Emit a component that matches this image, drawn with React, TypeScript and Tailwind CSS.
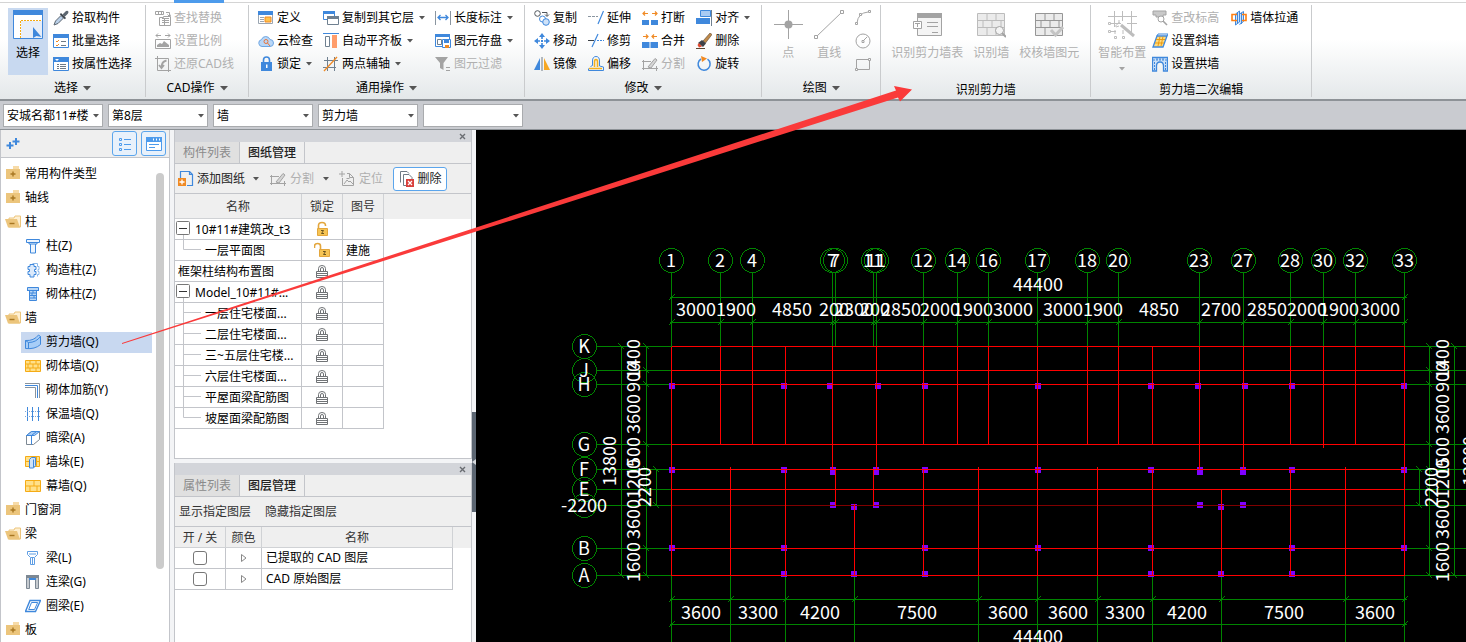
import { Fragment, type ReactNode } from "react";

const BLUE = "#3f88dc";
const GRAY = "#a3a3a3";
const ORANGE = "#f08a24";

// 16x16 icons
const icons: Record<string, ReactNode> = {
  pick: (
    <>
      <path d="M1 15l1.5-4L8 5.5l2.5 2.5L5 13.5z" fill="#b9cfe8" stroke="#5c6670" />
      <path d="M8 3l5 5-1.2 1.2-5-5z" fill="#3d444b" />
      <path d="M9.5 4.5L13 1q1.5-.8 2.2.2T15 3.5L11.5 7z" fill="#5c6670" />
    </>
  ),
  batch: (
    <>
      <path d="M.5 2.5h15v12H.5z" fill="#fff" stroke={BLUE} />
      <path d="M0 1h16v4H0z" fill={BLUE} />
      <path d="M3 8l1 1 2-2M3 12l1 1 2-2" fill="none" stroke={ORANGE} />
      <path d="M8 8.5h5M8 12.5h5" stroke="#6f7a85" />
    </>
  ),
  prop: (
    <>
      <path d="M.5 2.5h15v12H.5z" fill="#fff" stroke={BLUE} />
      <path d="M0 1h16v5H0z" fill={BLUE} />
      <path d="M2 3h4L4 5z" fill="#fff" />
      <path d="M4 8.5h2M7 8.5h6M4 10.5h2M7 10.5h6M4 12.5h2M7 12.5h6" stroke="#6f7a85" />
    </>
  ),
  find: (
    <g fill="none" stroke={GRAY}>
      <path d="M.5 1.5h8v3h-8zM3.5 1.5v3M6.5 1.5v3M11 2.5h3.5V6M12.5 4.5l2 2 1.5-2" />
      <path d="M4.5 7.5h4v-1h7v9h-11zM7 8.5h7M7 10.5h7M7 12.5h7M9.5 8v7" />
    </g>
  ),
  scale: (
    <>
      <path d="M.5 6.5h15v9H.5z" fill="none" stroke={GRAY} />
      <path d="M2 14V12l3-2 2 1 2-3 5 4v2z" fill={GRAY} />
      <path d="M1 2.5h5M3 .5l-2 2 2 2M15 2.5h-5M13 .5l2 2-2 2" fill="none" stroke={GRAY} />
    </>
  ),
  restore: (
    <g fill="none" stroke={GRAY}>
      <path d="M2.5 0v14.5H16M0 2.5h13.5V16" />
      <path d="M11.5 4.5q-5 1-5 7M4 9l2.5 3L9 9" strokeWidth="1.8" />
    </g>
  ),
  define: (
    <>
      <path d="M.5 1.5h14v12H.5z" fill="#fff" stroke="#9aa5b1" />
      <path d="M0 1h15v4H0z" fill={BLUE} />
      <path d="M2 7.5h4M2 9.5h4M2 11.5h4" stroke="#9aa5b1" />
      <path d="M7 7h6v5H7z" fill="#ffc34d" stroke={ORANGE} />
    </>
  ),
  cloud: (
    <>
      <path d="M4 13.5a3.5 3.5 0 0 1-.5-6.9A4.5 4.5 0 0 1 12 6.5a3.5 3.5 0 0 1 0 7z" fill="#b9d7f7" stroke="#6fa6e2" />
      <circle cx="8" cy="8.5" r="2" fill="none" stroke="#e8743b" />
      <path d="M9.5 10l2.5 3" stroke="#e8743b" />
    </>
  ),
  lock: (
    <>
      <path d="M5.5 7V4a3 3 0 0 1 6 0v3" fill="none" stroke={BLUE} strokeWidth="1.6" />
      <path d="M3 6h11v9H3z" fill={BLUE} />
      <path d="M8 8.5h1.5V12H8z" fill="#fff" />
    </>
  ),
  copyFloor: (
    <>
      <path d="M.5 1.5h11v8h-11z" fill="#fff" stroke={BLUE} />
      <path d="M0 1h12v3H0z" fill={BLUE} />
      <path d="M4.5 6.5h11v8h-11z" fill="#fff" stroke="#6f8090" />
      <path d="M4 6h12v3H4z" fill="#6f8090" />
    </>
  ),
  alignSlab: (
    <>
      <path d="M0 .5h16" stroke={BLUE} />
      <path d="M2.5 3.5h4v10h-4z" fill="#fff" stroke="#6f8090" />
      <path d="M9 2h5v13H9z" fill="#ff9d6b" />
    </>
  ),
  axis: (
    <>
      <path d="M1 4.5h14M0 11.5h13M4.5 1v14M11.5 1v14" stroke="#6f8090" />
      <path d="M1 15L14 1" stroke={ORANGE} strokeWidth="1.3" />
    </>
  ),
  length: (
    <>
      <path d="M.5 1v14M15.5 1v14" stroke="#8a95a0" />
      <path d="M3 7.5h10M5.5 5L3 7.5 5.5 10M10.5 5L13 7.5 10.5 10" fill="none" stroke={BLUE} strokeWidth="1.3" />
    </>
  ),
  save: (
    <>
      <path d="M.5 1.5h14v12H.5z" fill="#fff" stroke={BLUE} />
      <path d="M0 1h15v3H0z" fill={BLUE} />
      <path d="M2.5 6.5h4v5h-4z" fill="none" stroke="#6f8090" />
      <path d="M7.5 6.5h8v8h-8z" fill="#fff" stroke={BLUE} />
      <path d="M9 7h5v3H9z" fill={BLUE} />
      <path d="M10 12h4v3h-4z" fill={ORANGE} />
    </>
  ),
  filter: (
    <>
      <path d="M0 1h13L8.5 7v7L5 12V7z" fill={GRAY} />
      <path d="M11 11.5h4M11 14.5h4" stroke={GRAY} />
    </>
  ),
  copy: (
    <>
      <circle cx="3.5" cy="3.5" r="2.8" fill="#fff" stroke="#50565c" />
      <path d="M8 2.5h5V6M11 4.5l2 2 2-2" fill="none" stroke="#50565c" />
      <circle cx="8.5" cy="9" r="3" fill="#fff" stroke={BLUE} />
      <circle cx="12" cy="12" r="3.3" fill="#cfe2f8" stroke={BLUE} />
    </>
  ),
  move: (
    <>
      <path d="M8 0l3 4H5zM8 16l3-4H5zM0 8l4-3v6zM16 8l-4-3v6z" fill={BLUE} />
      <path d="M8 3v3M8 10v3M3 8h3M10 8h3" stroke={BLUE} strokeWidth="1.6" />
      <path d="M7 7h2v2H7z" fill={BLUE} />
    </>
  ),
  mirror: (
    <>
      <path d="M6 2v12H0z" fill={BLUE} />
      <path d="M8 1v14" stroke="#6f7a85" />
      <path d="M10 2v12h6z" fill="#f7a823" />
    </>
  ),
  extend: (
    <>
      <path d="M0 6.5h10" stroke="#8a95a0" strokeDasharray="3 1" />
      <path d="M10 14L15.5 1" stroke={BLUE} strokeWidth="1.2" />
    </>
  ),
  trim: (
    <>
      <path d="M0 7.5h6" stroke="#3a4046" />
      <path d="M9 7.5h7" stroke={BLUE} strokeDasharray="2 1" />
      <path d="M4 14L10 1" stroke={BLUE} strokeWidth="1.2" />
    </>
  ),
  offset: (
    <>
      <path d="M2.5 10.5l2-1V5Q4.500.5 8 .5T11.5 5v5l4 1v3.5H.5v-2" fill="none" stroke={BLUE} />
      <path d="M1 12.5h13M6.500 11V6q0-2.500 1.500-2.500T9.500 6v5" fill="none" stroke="#f2b01e" strokeWidth="1.6" />
    </>
  ),
  break: (
    <>
      <path d="M0 10h7v5H0zM9 10h7v5H9z" fill={BLUE} />
      <path d="M1 3.5h5M3 1.5l-2 2 2 2M10 3.5h5M13 1.5l2 2-2 2" fill="none" stroke={ORANGE} strokeWidth="1.2" />
    </>
  ),
  merge: (
    <>
      <path d="M0 9h7.5v6H0zM8.500 9H16v6H8.500z" fill={BLUE} />
      <path d="M1 3.5h5M4 1.5l2 2-2 2M10 3.5h5M12 1.5l-2 2 2 2" fill="none" stroke={ORANGE} strokeWidth="1.2" />
    </>
  ),
  split: (
    <g fill="none" stroke={GRAY}>
      <path d="M1.5 4v10M0 5.5h9M0 12.5h16M14.5 10v5" />
      <path d="M6 11l7-8.5 2 1.5-6 8z" fill="#d5d5d5" />
    </g>
  ),
  align: (
    <>
      <path d="M4.500.5h10v6h-10z" fill="#a9cbf3" stroke={BLUE} />
      <path d="M0 8h14v6H0z" fill={BLUE} />
      <path d="M15.5 0v16" stroke="#6f8090" />
    </>
  ),
  erase: (
    <>
      <path d="M7 8l7-8 2 1.5L9.500 10z" fill="#c08a4a" stroke="#5a4630" strokeWidth=".6" />
      <path d="M2 10l4-3 4 3.5L7 14z" fill="#3d4248" />
      <path d="M3 10l3 3.5-3 1L1.500 12z" fill="#e0482e" />
      <path d="M0 15.5h9" stroke="#5a4630" />
    </>
  ),
  rotate: (
    <>
      <path d="M5 3A6 6 0 1 0 11.5 3.2" fill="none" stroke={BLUE} strokeWidth="1.5" />
      <path d="M5 0l6 2.5L6 6z" fill={ORANGE} />
    </>
  ),
  arc: (
    <g fill="none" stroke={GRAY}>
      <path d="M2 13Q3 3 13 2" />
      <path d="M.5 12.5h2v2h-2zM13.500.5h2v2h-2zM4.500 3.500h2v2h-2z" fill="#fff" />
    </g>
  ),
  circle: (
    <g fill="none" stroke={GRAY}>
      <circle cx="8" cy="8" r="7" />
      <path d="M8 8l4-4M7 7.5h2v2H7z" />
    </g>
  ),
  rect: (
    <g fill="none" stroke={GRAY}>
      <path d="M1.5 3.5h13v10h-13z" />
      <path d="M.5 12.5h2v2h-2zM13.5 2.5h2v2h-2z" fill="#fff" />
    </g>
  ),
  elevation: (
    <>
      <path d="M1 1h13v4h-3v2H4V5H1z" fill="#c9c9c9" stroke={GRAY} />
      <circle cx="9" cy="9" r="3" fill="#fff" stroke={GRAY} />
      <path d="M11 11l4 4" stroke={GRAY} strokeWidth="1.6" />
    </>
  ),
  slopeWall: (
    <>
      <path d="M1 14l4-11h10l-4 11z" fill="#ffdb7d" stroke={BLUE} strokeWidth="1.3" />
      <path d="M4 6.5h9M3 10h9M8 3.5L6 13M11 3.5L9 13" stroke="#eb9b13" />
      <path d="M5 3l1-2h10l-1 2" fill="none" stroke={BLUE} />
    </>
  ),
  archWall: (
    <>
      <path d="M.5 1.5h15V15h-4v-5q0-4-3.500-4T4.500 10v5h-4z" fill="#cfe2f8" stroke={BLUE} strokeWidth="1.3" />
      <path d="M1 4h14M2.500 6v9M13.500 6v9M5 2v2M8 2v2M11 2v2" stroke={BLUE} strokeDasharray="2 1" />
    </>
  ),
  throughWall: (
    <>
      <path d="M4.500 4l4-3v11l-4 3zM8.500 4l4-2.500v10l-4 3" fill="#cfe2f8" stroke={BLUE} />
      <path d="M6.500 3v11M10.500 3v11" stroke={BLUE} />
      <path d="M6 4.500H1v6h5M11 4.500h4v6h-4" fill="none" stroke="#ff7f11" strokeWidth="1.6" />
    </>
  ),
  folder: (
    <>
      <path d="M8 0h6v3H8z" fill="#f7dba8" />
      <path d="M1 3h14v10H1z" fill="#ecc57c" />
      <path d="M8 5.5v5M5.500 8h5" stroke="#a87722" strokeWidth="1.4" />
    </>
  ),
  folderOpen: (
    <>
      <path d="M4 4h5l1-2h5.500v11H4z" fill="#fff0d2" stroke="#ecc57c" />
      <path d="M0 5h12l3 8.500H3z" fill="#ecc57c" />
      <path d="M4.500 9.500h5" stroke="#a87722" strokeWidth="1.4" />
    </>
  ),
  column: (
    <path d="M1.5 1.5h13v3H12v1.5h-1.500v9h-5V6H4V4.500H1.500zM4 4.500h8M5.500 6h5" fill="#eef5fd" stroke={BLUE} />
  ),
  structColumn: (
    <g fill="#dceafb" stroke={BLUE}>
      <path d="M7.500 1.500h5v3h1.500v3h-1v2h1v3h-1.500v2" fill="none" stroke="#8bb8ea" />
      <path d="M5 2.500h4v2h2v3h-1.500v2H11v3H9v2.500H5V12.500H3v-3h1.500v-2H3v-3h2z" />
    </g>
  ),
  masonryColumn: (
    <>
      <path d="M2.500 1.500h11v3h-2v10h-7v-10h-2z" fill="#b9d7f7" stroke={BLUE} />
      <path d="M2 4.500h12M5 7h6M5 9.500h6M5 12h6M8 4v3M7 7v2.500M9 9.500V12" stroke={BLUE} />
    </>
  ),
  shearWall: (
    <>
      <path d="M.5 6.500Q9 7 13.500 1L15.500 2.500v8Q10 15.500.5 14.500z" fill="#a7cdf7" stroke={BLUE} />
      <path d="M.5 6.500l3 2v6M3.500 8.500Q11 8.500 15.500 2.500" fill="none" stroke={BLUE} />
    </>
  ),
  brickWall: (
    <>
      <path d="M.5 2.500h15v11H.5z" fill="#ffe08a" stroke="#f5ab14" />
      <path d="M0 6h16M0 10h16M5 2v4M11 2v4M8 6v4M3 6v4M13 6v4M5 10v4M11 10v4" stroke="#f5ab14" />
    </>
  ),
  rebar: (
    <>
      <path d="M0 1.500h14.500V16M0 5.500h10.500V16" fill="none" stroke="#8a939c" />
      <path d="M0 3.500h12.500V16" fill="none" stroke={BLUE} />
    </>
  ),
  insulation: (
    <>
      <path d="M2.500 1v14M7.500 1v14M13.500 1v14" stroke={BLUE} />
      <path d="M0 5.500h16M0 10.500h16" stroke="#7aa7dc" strokeDasharray="1 1" />
    </>
  ),
  hiddenBeam: (
    <>
      <path d="M1.500 5.500l5-4h8v8l-6 5h-7z" fill="#fff" stroke="#7d8893" />
      <path d="M1.500 5.500l5-4h8l-5 4z" fill="#a7cdf7" stroke={BLUE} />
      <path d="M1.500 5.500h5v9M6.500 5.500l5-4" fill="none" stroke={BLUE} />
    </>
  ),
  pier: (
    <>
      <path d="M.5 2.500h14v10H.5z" fill="#ffe08a" stroke="#f5ab14" />
      <path d="M0 7.500h15M11.500 3v9" stroke="#f5ab14" />
      <path d="M4.500 5.500l2-2h4v8l-2 2.500h-4z" fill="#cfe2f8" stroke={BLUE} />
      <path d="M8.500 5.500v8" stroke={BLUE} />
    </>
  ),
  curtain: (
    <>
      <path d="M.5 2.500h15v11H.5z" fill="#ffe08a" stroke="#f5ab14" />
      <path d="M0 8h16M9 2v6M5 8v6M12 8v6" stroke="#f5ab14" />
    </>
  ),
  beam: (
    <path d="M2.500 1.500h10v3L9.500 7.500v7h-4v-7l-3-3zM4 4h7M6 7.500h3M7.500 8v6" fill="#fff" stroke="#5f9ee4" />
  ),
  linkBeam: (
    <>
      <path d="M1.500 2.500h3v12h-3zM10.500 2.500h3v12h-3z" fill="#c6cbd0" stroke="#7d8893" />
      <path d="M1 1h13v3H1z" fill="#7d8893" />
      <path d="M4 4h7v2H4z" fill={BLUE} />
    </>
  ),
  ringBeam: (
    <>
      <path d="M5 2.500h10.500l-5 11H.5z" fill="#fff" stroke={BLUE} strokeWidth="1.4" />
      <path d="M6.500 4.500h6.200l-3.200 7H3.700z" fill="none" stroke={BLUE} />
    </>
  ),
  addDrawing: (
    <>
      <path d="M2.500 7V.5h9l3 3v11H9M11.500.5v3h3" fill="none" stroke={BLUE} strokeWidth="1.2" />
      <path d="M0 7h8v8H0z" fill={ORANGE} />
      <path d="M4 8.500v5M1.500 11h5" stroke="#fff" strokeWidth="1.3" />
    </>
  ),
  locate: (
    <g fill="none" stroke={GRAY}>
      <path d="M3 0v6M0 3h6M3.500 7v7.500h11v-8l-4-4H8M10.500 2.500v4h4" />
      <path d="M5 13l3-4 2 2 1-1 3 3M7.500 7.500h3" />
    </g>
  ),
  remove: (
    <>
      <path d="M1.500 11.500v-11H8l2 2M4.500 14.500v-11H10l3 3V8M4.500 14.500H7" fill="none" stroke="#6f7a85" />
      <path d="M7 8h8v8H7z" fill="#d9403c" />
      <path d="M9 10l4 4M13 10l-4 4" stroke="#fff" strokeWidth="1.2" />
    </>
  ),
  openLock: (
    <>
      <path d="M4.500 7V4.500q0-3 3.500-3t3.500 3V5" fill="none" stroke="#e3a63c" strokeWidth="1.6" />
      <path d="M3.500 7.500h10v7h-10z" fill="#f6c453" stroke="#e3a63c" />
      <path d="M7 9.500h2.500L7.500 12.500H10" fill="none" stroke="#6b5520" />
    </>
  ),
  sideLock: (
    <>
      <path d="M.5 6V4q0-2.500 3-2.500T6.500 4v3.500" fill="none" stroke="#e3a63c" strokeWidth="1.6" />
      <path d="M5.500 7.500h10v7h-10z" fill="#f6c453" stroke="#e3a63c" />
      <path d="M9 9.500h2.500L9.500 12.500H12" fill="none" stroke="#6b5520" />
    </>
  ),
  grayLock: (
    <g fill="none" stroke="#707376">
      <path d="M4.500 8V5.500q0-3 3.500-3t3.500 3V8" />
      <path d="M6.500 8V6q0-1.500 1.500-1.500T9.500 6v2" />
      <path d="M2.500 8.500h11v6h-11zM3 10.500h10M3 12.500h10" />
    </g>
  ),
};

function Icon({ name }: { name: string }) {
  return (
    <svg viewBox="0 0 16 16" className="h-4 w-4 shrink-0" aria-hidden="true">
      {icons[name]}
    </svg>
  );
}

function Caret() {
  return (
    <svg viewBox="0 0 6 4" className="ml-[5px] h-1 w-1.5 shrink-0" aria-hidden="true">
      <path d="M0 0h6L3 3.500z" fill="#555" />
    </svg>
  );
}

type Tool = { icon: string; text: string; menu?: boolean; off?: boolean };

function ToolColumn({ tools }: { tools: Tool[] }) {
  return (
    <div className="flex flex-col">
      {tools.map((t) => (
        <button
          key={t.text}
          type="button"
          disabled={t.off}
          className="flex h-[23px] items-center whitespace-nowrap text-black disabled:text-[#b0b0b0]"
        >
          <Icon name={t.icon} />
          <span className="ml-[3px]">{t.text}</span>
          {t.menu && <Caret />}
        </button>
      ))}
    </div>
  );
}

function BigTool({ text, children, menu }: { text: string; children: ReactNode; menu?: boolean }) {
  return (
    <button type="button" disabled className="flex h-[69px] flex-col items-center whitespace-nowrap pt-[3px] text-[#b0b0b0]">
      <svg viewBox="0 0 30 30" className="h-[30px] w-[30px]" aria-hidden="true">
        {children}
      </svg>
      <span className="mt-[5px] leading-[18px]">{text}</span>
      {menu && (
        <svg viewBox="0 0 6 4" className="mt-[5px] h-1 w-1.5" aria-hidden="true">
          <path d="M0 0h6L3 3.500z" fill={GRAY} />
        </svg>
      )}
    </button>
  );
}

function Group({
  title,
  body,
  menu,
  low,
  children,
}: {
  title: string;
  body: string;
  menu?: boolean;
  low?: boolean;
  children: ReactNode;
}) {
  return (
    <section className="flex shrink-0 flex-col border-r border-[#c9cbcd] pt-px">
      <div className={`flex ${body}`}>{children}</div>
      <div className={`flex h-[22px] items-center justify-center leading-[14px] ${low ? "pt-2" : "pt-1"}`}>
        {title}
        {menu && (
          <svg viewBox="0 0 8 5" className="ml-[5px] h-[5px] w-2" aria-hidden="true">
            <path d="M0 0h8L4 4.500z" fill="#555" />
          </svg>
        )}
      </div>
    </section>
  );
}

function Ribbon() {
  return (
    <header className="overflow-hidden border-b-2 border-[#8d9297] bg-linear-to-b from-white from-40% to-[#e4e8ea]">
      <div className="h-[3px] border-b border-[#d4d4d4]">
        <div className="ml-[174px] h-[3px] w-[50px] bg-[#4d9bec]" />
      </div>
      <div className="flex py-[2px]">
        <Group title="选择" menu body="gap-[5px] pl-2 pr-[13px]">
          <button type="button" className="mt-[2px] flex h-[67px] w-10 flex-col items-center bg-[#c8d9f0] pt-[2px]">
            <svg viewBox="0 0 30 30" className="h-[30px] w-[30px]" aria-hidden="true">
              <path d="M.5.500h29v28H.5z" fill="#fff" stroke={BLUE} />
              <path d="M0 0h30v5H0z" fill={BLUE} />
              <path d="M8 11h21v17H8z" fill="#e8eef8" />
              <path d="M7.500 28V10.500H29" fill="none" stroke="#f5ab14" strokeDasharray="2 1" />
              <path d="M20 17v11l3.500-2 5 1z" fill={BLUE} />
            </svg>
            <span className="mt-1 leading-[18px]">选择</span>
          </button>
          <ToolColumn
            tools={[
              { icon: "pick", text: "拾取构件" },
              { icon: "batch", text: "批量选择" },
              { icon: "prop", text: "按属性选择" },
            ]}
          />
        </Group>
        <Group title="CAD操作" menu body="pl-[9px] pr-[14px]">
          <ToolColumn
            tools={[
              { icon: "find", text: "查找替换", off: true },
              { icon: "scale", text: "设置比例", off: true },
              { icon: "restore", text: "还原CAD线", off: true },
            ]}
          />
        </Group>
        <Group title="通用操作" menu body="gap-[10px] pl-[9px] pr-[11px]">
          <ToolColumn
            tools={[
              { icon: "define", text: "定义" },
              { icon: "cloud", text: "云检查" },
              { icon: "lock", text: "锁定", menu: true },
            ]}
          />
          <ToolColumn
            tools={[
              { icon: "copyFloor", text: "复制到其它层", menu: true },
              { icon: "alignSlab", text: "自动平齐板", menu: true },
              { icon: "axis", text: "两点辅轴", menu: true },
            ]}
          />
          <ToolColumn
            tools={[
              { icon: "length", text: "长度标注", menu: true },
              { icon: "save", text: "图元存盘", menu: true },
              { icon: "filter", text: "图元过滤", off: true },
            ]}
          />
        </Group>
        <Group title="修改" menu body="gap-[11px] pl-[9px] pr-[11px]">
          <ToolColumn
            tools={[
              { icon: "copy", text: "复制" },
              { icon: "move", text: "移动" },
              { icon: "mirror", text: "镜像" },
            ]}
          />
          <ToolColumn
            tools={[
              { icon: "extend", text: "延伸" },
              { icon: "trim", text: "修剪" },
              { icon: "offset", text: "偏移" },
            ]}
          />
          <ToolColumn
            tools={[
              { icon: "break", text: "打断" },
              { icon: "merge", text: "合并" },
              { icon: "split", text: "分割", off: true },
            ]}
          />
          <ToolColumn
            tools={[
              { icon: "align", text: "对齐", menu: true },
              { icon: "erase", text: "删除" },
              { icon: "rotate", text: "旋转" },
            ]}
          />
        </Group>
        <Group title="绘图" menu body="gap-[11px] pl-[11px] pr-[9px]">
          <BigTool text="点">
            <path d="M15.500 1v29M1 15.500h29" stroke={GRAY} />
            <circle cx="15.500" cy="15.500" r="4" fill={GRAY} />
          </BigTool>
          <BigTool text="直线">
            <path d="M2 28L28 3" stroke={GRAY} />
            <path d="M.5 26.500h3v3h-3zM26.500 1.500h3v3h-3z" fill="#fff" stroke={GRAY} />
          </BigTool>
          <div className="flex flex-col">
            {[
              ["arc", "圆弧"],
              ["circle", "圆"],
              ["rect", "矩形"],
            ].map(([icon, label]) => (
              <button key={icon} type="button" disabled aria-label={label} className="flex h-[23px] items-center">
                <Icon name={icon} />
              </button>
            ))}
          </div>
        </Group>
        <Group title="识别剪力墙" low body="gap-[10px] pl-[10px] pr-[11px]">
          <BigTool text="识别剪力墙表">
            <path d="M5.500 5.500h24v21h-24z" fill="#f4f4f4" stroke={GRAY} />
            <path d="M5 4h25v5H5z" fill={GRAY} />
            <path d="M15 13.500h11M15 17.500h11M20 23.500h6" stroke={GRAY} />
            <path d="M1.500 12.500h8v7h-8z" fill="#fff" stroke={GRAY} />
            <path d="M3 14.500h5M5.500 14v4" stroke={GRAY} />
          </BigTool>
          <BigTool text="识别墙">
            <path d="M1.500 4.500h27v22h-27z" fill="#ebebeb" stroke="#bcbcbc" />
            <path d="M1 11.500h28M1 18.500h28M11 4v7M20 4v7M7 11v7M16 11v7M25 11v7M11 18v8M20 18v8" stroke="#bcbcbc" />
            <circle cx="23.500" cy="21.500" r="4" fill="#f4f4f4" stroke={GRAY} />
            <path d="M26 24l4 4" stroke={GRAY} strokeWidth="2" />
          </BigTool>
          <BigTool text="校核墙图元">
            <path d="M1.500 4.500h27v22h-27z" fill="#ebebeb" stroke="#969696" />
            <path d="M1 11.500h28M1 18.500h28M11 4v7M20 4v7M7 11v7M16 11v7M25 11v7M11 18v8" stroke="#969696" />
            <path d="M17 21l4.500 5L29 18" fill="none" stroke="#c4c4c4" strokeWidth="3" />
          </BigTool>
        </Group>
        <Group title="剪力墙二次编辑" low body="gap-[6px] pl-[7px] pr-[13px]">
          <BigTool text="智能布置" menu>
            <g fill="none" stroke="#bdbdbd">
              <path d="M7.500 2v16M15.500 2v10M24.500 2v22M1 7.500h29M4 14.500h10M20 14.500h10M4 22.500h5M7.500 18l5-5M8 25v-4M16 25v-4" />
              <path d="M1.500 13.500h2v2h-2zM1.500 21.500h2v2h-2zM7.500 27.500h2v2h-2zM15.500 27.500h2v2h-2z" />
              <path d="M14 16l13 11" strokeWidth="3" />
              <path d="M12 11v4M9 18l3-1" />
            </g>
          </BigTool>
          <div className="flex gap-3">
            <ToolColumn
              tools={[
                { icon: "elevation", text: "查改标高", off: true },
                { icon: "slopeWall", text: "设置斜墙" },
                { icon: "archWall", text: "设置拱墙" },
              ]}
            />
            <ToolColumn tools={[{ icon: "throughWall", text: "墙体拉通" }]} />
          </div>
        </Group>
      </div>
    </header>
  );
}

function Pickers() {
  const values = [
    ["工程", "安城名都11#楼"],
    ["楼层", "第8层"],
    ["类别", "墙"],
    ["构件类型", "剪力墙"],
    ["构件", ""],
  ];
  return (
    <div className="flex gap-[5px] border-b border-[#8d9297] bg-[#c9cbd0] px-[3px] pt-[3px] pb-[2px]">
      {values.map(([label, value]) => (
        <label key={label} className="relative flex w-[100px]">
          <select aria-label={label} className="h-[23px] w-full appearance-none border border-[#a9abae] bg-white pl-[3px] leading-[21px]">
            <option>{value}</option>
          </select>
          <svg viewBox="0 0 6 4" className="pointer-events-none absolute top-[10px] right-1 h-1 w-1.5" aria-hidden="true">
            <path d="M0 0h6L3 3.500z" fill="#555" />
          </svg>
        </label>
      ))}
    </div>
  );
}

const tree = [
  { text: "常用构件类型", icon: "folder" },
  { text: "轴线", icon: "folder" },
  { text: "柱", icon: "folderOpen" },
  { text: "柱(Z)", icon: "column", child: true },
  { text: "构造柱(Z)", icon: "structColumn", child: true },
  { text: "砌体柱(Z)", icon: "masonryColumn", child: true },
  { text: "墙", icon: "folderOpen" },
  { text: "剪力墙(Q)", icon: "shearWall", child: true, active: true },
  { text: "砌体墙(Q)", icon: "brickWall", child: true },
  { text: "砌体加筋(Y)", icon: "rebar", child: true },
  { text: "保温墙(Q)", icon: "insulation", child: true },
  { text: "暗梁(A)", icon: "hiddenBeam", child: true },
  { text: "墙垛(E)", icon: "pier", child: true },
  { text: "幕墙(Q)", icon: "curtain", child: true },
  { text: "门窗洞", icon: "folder" },
  { text: "梁", icon: "folderOpen" },
  { text: "梁(L)", icon: "beam", child: true },
  { text: "连梁(G)", icon: "linkBeam", child: true },
  { text: "圈梁(E)", icon: "ringBeam", child: true },
  { text: "板", icon: "folder" },
];

function ComponentTree() {
  return (
    <nav className="flex w-[170px] shrink-0 flex-col border-x border-[#c3c5ca] bg-white">
      <div className="flex h-7 items-center border-b border-[#c3c5ca] bg-[#efefef] pr-[3px] pl-[5px]">
        <svg viewBox="0 0 14 14" className="h-3.5 w-3.5" aria-hidden="true">
          <path d="M4 5v7M.5 8.500h7M10 1v7M6.500 4.500h7" stroke={BLUE} strokeWidth="2" />
        </svg>
        <div className="ml-auto flex gap-1">
          <button type="button" aria-label="列表" className="flex h-[25px] w-[25px] items-center justify-center rounded-[3px] border border-[#5ba5ec] bg-[#e8f1fb]">
            <svg viewBox="0 0 16 16" className="h-4 w-4" fill="none" stroke="#4d9bec">
              <path d="M2.500 2.500h2v2h-2zM2.500 7.500h2v2h-2zM2.500 12.500h2v2h-2zM7 3.500h7M7 8.500h7M7 13.500h7" />
            </svg>
          </button>
          <button type="button" aria-label="窗口" className="flex h-[25px] w-[25px] items-center justify-center rounded-[3px] border border-[#5ba5ec] bg-[#e8f1fb]">
            <svg viewBox="0 0 16 16" className="h-4 w-4">
              <path d="M.5 1.500h15v13H.5z" fill="#fff" stroke="#4d9bec" />
              <path d="M0 1h16v5H0z" fill="#4d9bec" />
              <path d="M7 3.500h1M10 3.500h1M13 3.500h1" stroke="#fff" strokeWidth="2" />
              <path d="M3 8.500h10M3 11.500h6" stroke="#4d9bec" />
            </svg>
          </button>
        </div>
      </div>
      <div className="flex min-h-0 flex-1 justify-between overflow-hidden pr-[5px]">
        <ul className="w-[151px] pt-1">
          {tree.map((n) => (
            <li key={n.text} className={`flex h-6 items-center ${n.child ? "pl-5" : ""}`}>
              <button
                type="button"
                className={`flex h-[21px] w-full items-center whitespace-nowrap ${n.child ? "gap-[5px] pl-1" : "gap-1 pl-1"} ${n.active ? "bg-[#c8d8f0]" : ""}`}
              >
                <Icon name={n.icon} />
                {n.text}
              </button>
            </li>
          ))}
        </ul>
        <div className="mt-[15px] h-[396px] w-2 rounded-full bg-[#cbcbcb]" />
      </div>
    </nav>
  );
}

function PanelHead({ tabs }: { tabs: [string, string] }) {
  return (
    <>
      <div className="flex h-3 items-center justify-end bg-[#d3d5da] pr-[5px]">
        <button type="button" aria-label="关闭">
          <svg viewBox="0 0 7 7" className="h-[7px] w-[7px]">
            <path d="M1 1l5 5M6 1L1 6" stroke="#6a6d72" strokeWidth="1.4" />
          </svg>
        </button>
      </div>
      <div role="tablist" className="flex h-[22px] border-b border-[#c3c5ca] bg-[#efefef]">
        <button type="button" role="tab" aria-selected="false" className="w-[65px] border-r border-[#c3c5ca] bg-[#e0e0e0] text-[#8a8a8a]">
          {tabs[0]}
        </button>
        <button type="button" role="tab" aria-selected="true" className="w-[65px] border-r border-[#c3c5ca] font-medium text-[#222]">
          {tabs[1]}
        </button>
      </div>
    </>
  );
}

type Drawing = { name: string; kind: "root" | "child" | "last" | "plain"; lock: string; no?: string };

const drawings: Drawing[] = [
  { name: "10#11#建筑改_t3", kind: "root", lock: "openLock" },
  { name: "一层平面图", kind: "last", lock: "sideLock", no: "建施" },
  { name: "框架柱结构布置图", kind: "plain", lock: "grayLock" },
  { name: "Model_10#11#...", kind: "root", lock: "grayLock" },
  { name: "一层住宅楼面...", kind: "child", lock: "grayLock" },
  { name: "二层住宅楼面...", kind: "child", lock: "grayLock" },
  { name: "三~五层住宅楼...", kind: "child", lock: "grayLock" },
  { name: "六层住宅楼面...", kind: "child", lock: "grayLock" },
  { name: "平屋面梁配筋图", kind: "child", lock: "grayLock" },
  { name: "坡屋面梁配筋图", kind: "last", lock: "grayLock" },
];

function Branch({ kind }: { kind: Drawing["kind"] }) {
  if (kind === "plain") return <span className="w-[3px]" />;
  if (kind === "root") {
    return (
      <svg viewBox="0 0 20 20" className="h-5 w-5 shrink-0" fill="none" aria-hidden="true">
        <rect x="1.500" y="2.500" width="13" height="13" rx="1" fill="#fff" stroke="#777" />
        <path d="M4 9.500h8" stroke="#333" />
        <path d="M8.500 16v4" stroke="#c3c5ca" />
      </svg>
    );
  }
  return (
    <svg viewBox="0 0 30 20" className="h-5 w-[30px] shrink-0" fill="none" stroke="#c3c5ca" aria-hidden="true">
      <path d={kind === "last" ? "M8.500 0v9.500H26" : "M8.500 0v20M8.500 9.500H26"} />
    </svg>
  );
}

const th = "border-r border-b border-[#d0d2d5] p-0 pt-0.5 font-normal text-[#333]";
const td = "h-[21px] border-r border-b border-[#c3c5ca] p-0";

function DrawingPanel() {
  return (
    <section className="border border-t-0 border-[#c3c5ca] bg-white pb-[29px]">
      <PanelHead tabs={["构件列表", "图纸管理"]} />
      <div className="flex h-[30px] items-center whitespace-nowrap border-b border-[#c3c5ca] bg-[#efefef] pl-[3px] text-[#222]">
        <button type="button" className="flex items-center gap-[3px]">
          <Icon name="addDrawing" />
          添加图纸
          <Caret />
        </button>
        <button type="button" disabled className="ml-[11px] flex items-center gap-1 text-[#b0b0b0]">
          <Icon name="split" />
          分割
          <Caret />
        </button>
        <button type="button" disabled className="ml-[10px] flex items-center gap-1 text-[#b0b0b0]">
          <Icon name="locate" />
          定位
        </button>
        <button type="button" className="ml-[10px] flex h-6 w-[54px] items-center justify-center gap-[3px] rounded-[3px] border border-[#5ba5ec] bg-white">
          <Icon name="remove" />
          删除
        </button>
      </div>
      <table className="w-full table-fixed border-separate border-spacing-0">
        <thead>
          <tr className="h-[25px] bg-[#efefef]">
            <th className={`${th} w-[127px]`}>名称</th>
            <th className={`${th} w-[41px]`}>锁定</th>
            <th className={`${th} w-[41px]`}>图号</th>
            <td />
          </tr>
        </thead>
        <tbody>
          {drawings.map((d) => (
            <tr key={d.name}>
              <td className={td}>
                <div className="flex h-5 items-center overflow-hidden whitespace-nowrap">
                  <Branch kind={d.kind} />
                  <span className="pt-0.5">{d.name}</span>
                </div>
              </td>
              <td className={td}>
                <div className="flex justify-center">
                  <Icon name={d.lock} />
                </div>
              </td>
              <td className={td}>
                <div className="flex h-5 items-center pt-0.5 pl-[3px]">{d.no}</div>
              </td>
              <td />
            </tr>
          ))}
        </tbody>
      </table>
    </section>
  );
}

function LayerPanel() {
  return (
    <section className="mt-1 flex-1 border-x border-[#c3c5ca] bg-white">
      <PanelHead tabs={["属性列表", "图层管理"]} />
      <div className="flex h-[30px] items-center gap-[14px] border-b border-[#c3c5ca] bg-[#efefef] pl-1 text-[#333]">
        <button type="button">显示指定图层</button>
        <button type="button">隐藏指定图层</button>
      </div>
      <table className="w-full table-fixed border-separate border-spacing-0">
        <thead>
          <tr className="h-[21px] bg-[#efefef]">
            <th className={`${th} w-[51px]`}>开 / 关</th>
            <th className={`${th} w-[36px]`}>颜色</th>
            <th className={`${th} w-[191px]`}>名称</th>
            <td />
          </tr>
        </thead>
        <tbody>
          {["已提取的 CAD 图层", "CAD 原始图层"].map((name) => (
            <tr key={name}>
              <td className={td}>
                <div className="flex justify-center">
                  <input type="checkbox" aria-label={name} className="h-3.5 w-3.5 appearance-none rounded-[3px] border border-[#777] bg-white" />
                </div>
              </td>
              <td className={td}>
                <svg viewBox="0 0 6 8" className="mx-auto h-2 w-1.5" aria-hidden="true">
                  <path d="M.5.500v7L5 4z" fill="#fff" stroke="#888" />
                </svg>
              </td>
              <td className={`${td} pl-1`}>{name}</td>
              <td />
            </tr>
          ))}
        </tbody>
      </table>
    </section>
  );
}

// Plan geometry, in drawing units
const topAxes: [number, string][] = [
  [671, "1"], [720, "2"], [752, "4"], [832, "7"], [835, "7"], [873, "11"], [876, "11"], [923, "12"], [957, "14"],
  [988, "16"], [1037, "17"], [1087, "18"], [1118, "20"], [1199, "23"], [1243, "27"], [1290, "28"], [1323, "30"],
  [1355, "32"], [1404, "33"],
];
const sideAxes: [number, string][] = [
  [346, "K"], [370, "J"], [384, "H"], [444, "G"], [469, "F"], [489, "E"], [505, ""], [548, "B"], [575, "A"],
];
const bottomAxes = [671, 730, 785, 854, 978, 1037, 1097, 1152, 1221, 1345, 1404];
// x, y1, y2
const walls = [
  [671, 346, 575], [720, 346, 444], [752, 346, 444], [785, 346, 444], [785, 469, 575], [832, 346, 469],
  [876, 346, 469], [923, 346, 444], [923, 469, 575], [957, 346, 444], [988, 346, 444], [1037, 346, 575],
  [1087, 346, 444], [1118, 346, 444], [1152, 346, 444], [1152, 469, 575], [1199, 346, 469], [1243, 346, 469],
  [1290, 346, 444], [1290, 469, 575], [1323, 346, 447], [1355, 346, 444], [1404, 346, 575], [835, 469, 505],
  [873, 469, 505], [854, 503, 575], [730, 466, 575], [978, 466, 575], [1097, 466, 575], [1221, 489, 575],
  [1345, 466, 575],
];
const posts: [number, number[]][] = [
  [386, [672, 784, 830, 878, 925, 1038, 1151, 1198, 1245, 1292, 1404]],
  [470, [672, 784, 833, 876, 925, 1038, 1151, 1200, 1243, 1292, 1404]],
  [472, [833, 876, 1200, 1243]],
  [505, [833, 876, 1200, 1243]],
  [507, [854, 1221]],
  [548, [672, 784, 925, 1038, 1151, 1292, 1404]],
  [574, [784, 854, 925, 1151, 1221, 1292]],
];
const topDims: [number, string][] = [
  [696, "3000"], [736, "1900"], [792, "4850"], [834, "200"], [854, "2300"], [875, "200"], [901, "2850"],
  [940, "2000"], [973, "1900"], [1013, "3000"], [1063, "3000"], [1103, "1900"], [1159, "4850"], [1221, "2700"],
  [1267, "2850"], [1307, "2000"], [1339, "1900"], [1380, "3000"],
];
const bottomDims: [number, string][] = [
  [701, "3600"], [758, "3300"], [820, "4200"], [917, "7500"], [1008, "3600"], [1068, "3600"], [1125, "3300"],
  [1187, "4200"], [1284, "7500"], [1375, "3600"],
];
const sideDims: [number, string][] = [
  [359, "1400"], [377, "900"], [414, "3600"], [457, "1500"], [479, "1200"], [519, "3600"], [562, "1600"],
];

function Upright({ x, y, text }: { x: number; y: number; text: string }) {
  return (
    <text x={x} y={y} transform={`rotate(-90 ${x} ${y})`} dy="7">
      {text}
    </text>
  );
}

function Plan() {
  return (
    <main className="min-w-0 flex-1 overflow-hidden bg-black">
      <svg viewBox="476 130 990 512" preserveAspectRatio="xMinYMin slice" className="h-full w-full" role="img" aria-label="剪力墙平面图">
        <g transform="translate(.5 .5)" fill="none" stroke="#008400" shapeRendering="crispEdges">
          {topAxes.map(([x]) => (
            <Fragment key={x}>
              <circle cx={x} cy="260" r="12" />
              <path d={`M${x} 272V346M${x - 3} 325l6-6`} />
            </Fragment>
          ))}
          {sideAxes.map(([y]) => (
            <Fragment key={y}>
              <circle cx="584" cy={y} r="12" />
              <path d={`M596 ${y}H671M1404 ${y}H1466`} />
              {y !== 505 && <path d={`M643 ${y - 3}l6 6M1426 ${y - 3}l6 6`} />}
            </Fragment>
          ))}
          {bottomAxes.map((x) => (
            <path key={x} d={`M${x} 575V642M${x - 3} 602l6-6`} />
          ))}
          <path d="M669 297H1406M669 322H1406M669 599H1406M669 624H1406" />
          <path d="M668 300l6-6M1401 300l6-6M668 627l6-6M1401 627l6-6" />
          <path d="M621 346V575M646 346V575M656 469V505M1429 346V575M1454 346V575M1419 469V505" />
          <path d="M618 343l6 6M618 572l6 6M1451 343l6 6M1451 572l6 6M653 466l6 6M653 502l6 6M1416 466l6 6M1416 502l6 6" />
        </g>
        <g fill="#8000ff" shapeRendering="crispEdges">
          {posts.map(([y, xs]) => xs.map((x) => <rect key={`${x}-${y}`} x={x - 3} y={y - 3} width="6" height="6" />))}
        </g>
        <g transform="translate(.5 .5)" fill="none" stroke="#ff0000" shapeRendering="crispEdges">
          <path d="M671 346H1404M671 370H1404M671 384H1404M671 444H1404M671 469H1404M671 489H1404M671 548H1404M671 575H1404" />
          <path d="M671 505H1404" stroke="#800000" />
          {walls.map(([x, a, b]) => (
            <path key={`${x}-${a}`} d={`M${x} ${a}V${b}`} />
          ))}
        </g>
        <g fill="#fff" textAnchor="middle" className="font-['Noto_Sans_CJK_SC',sans-serif] text-[18px]">
          {topAxes.map(([x, text]) => (
            <text key={x} x={x} y="267">{text}</text>
          ))}
          {sideAxes.map(([y, text]) => (
            <text key={y} x="584" y={y + 7}>{text}</text>
          ))}
          <text x="584" y="512">-2200</text>
          <text x="1038" y="291">44400</text>
          <text x="1038" y="643">44400</text>
          {topDims.map(([x, text]) => (
            <text key={x} x={x} y="316">{text}</text>
          ))}
          {bottomDims.map(([x, text]) => (
            <text key={x} x={x} y="619">{text}</text>
          ))}
          {sideDims.map(([y, text]) => (
            <Fragment key={y}>
              <Upright x={633} y={y} text={text} />
              <Upright x={1442} y={y} text={text} />
            </Fragment>
          ))}
          <Upright x={609} y={461} text="13800" />
          <Upright x={644} y={487} text="2200" />
          <Upright x={1431} y={487} text="2200" />
          <Upright x={1469} y={461} text="13800" />
        </g>
      </svg>
    </main>
  );
}

export default function App() {
  return (
    <div className="relative flex h-screen flex-col overflow-hidden bg-[#f3f4f6] font-['Noto_Sans','Noto_Sans_CJK_SC',sans-serif] text-[12px] leading-[18px] text-black">
      <Ribbon />
      <Pickers />
      <div className="flex min-h-0 flex-1">
        <ComponentTree />
        <div className="ml-1 flex w-[298px] shrink-0 flex-col">
          <DrawingPanel />
          <LayerPanel />
        </div>
        <div className="flex w-1 shrink-0 flex-col pt-[282px]">
          <div className="flex h-[100px] items-center bg-[#5c6672]">
            <svg viewBox="0 0 4 6" className="h-1.5 w-1" aria-hidden="true">
              <path d="M4 0v6L0 3z" fill="#d5d8dc" />
            </svg>
          </div>
        </div>
        <Plan />
      </div>
      {/* pointer from the tree item to the ribbon group */}
      <svg viewBox="0 0 1466 642" className="pointer-events-none absolute top-0 left-0 h-[642px] w-[1466px]" aria-hidden="true">
        <path d="M122 343L896 90.500 894 86 912 89.500 900 101.500 898 97.500 122 344z" fill="#fa3a3a" />
      </svg>
    </div>
  );
}
